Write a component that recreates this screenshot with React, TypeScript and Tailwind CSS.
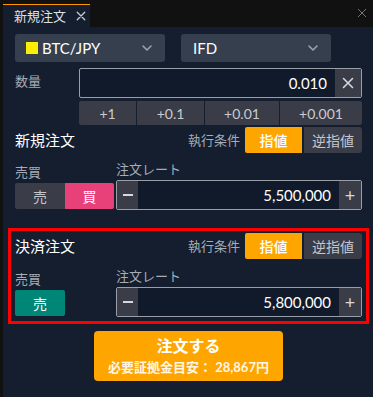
import React from "react";

const font = { fontFamily: 'Lato, "Noto Sans CJK JP", sans-serif' };

function Chevron() {
  return (
    <svg width="14" height="14" viewBox="0 0 14 14" fill="none">
      <path d="M3 5l4 4 4-4" stroke="#9aa3b2" strokeWidth="1.6" strokeLinecap="round" strokeLinejoin="round" />
    </svg>
  );
}

function XIcon({ size = 12, color = "#cfd3da", w = 1.5 }: { size?: number; color?: string; w?: number }) {
  return (
    <svg width={size} height={size} viewBox="0 0 12 12" fill="none">
      <path d="M1.5 1.5l9 9M10.5 1.5l-9 9" stroke={color} strokeWidth={w} strokeLinecap="round" />
    </svg>
  );
}

function CondHeader({ title }: { title: string }) {
  return (
    <div className="flex items-center h-[26px]">
      <div className="flex-1 text-[15px] text-white leading-none">{title}</div>
      <div className="text-[13px] text-[#a6abb4] mr-[5px] leading-none">執行条件</div>
      <div className="w-[57px] h-[26px] bg-[#ffa500] rounded-l-[2px] flex items-center justify-center text-white text-[14px] font-medium">指値</div>
      <div className="ml-[2px] w-[58px] h-[26px] bg-[#3a3c48] rounded-r-[3px] flex items-center justify-center text-[#c3c6cc] text-[14px]">逆指値</div>
    </div>
  );
}

function RateInput({ value }: { value: string }) {
  return (
    <div className="h-[30px] border border-[#9a9ea6] rounded-[2px] flex items-stretch bg-[#111a2a]">
      <div className="w-[21px] bg-[#3a3c48] flex items-center justify-center">
        <div className="w-[10px] h-[2px] bg-[#d6d8dc]" />
      </div>
      <div className="flex-1 flex items-center justify-end pr-[8px] text-white text-[15px]">{value}</div>
      <div className="w-[22px] bg-[#3a3c48] flex items-center justify-center text-[#d6d8dc] text-[18px] leading-none">+</div>
    </div>
  );
}

export default function App() {
  return (
    <div className="w-[373px] h-[397px] bg-[#111111] flex flex-col overflow-hidden" style={font}>
      <div className="h-[27px] flex items-end justify-between pl-[3px] shrink-0">
        <div className="w-[87px] h-[23px] border-t border-[#ff9800] bg-[#141e2f] flex items-center pl-[11px] gap-[10px]">
          <span className="text-[13px] text-[#dde0e5] leading-none">新規注文</span>
          <XIcon size={10} color="#c8ccd2" w={1.6} />
        </div>
        <div className="self-start mt-[8px] mr-[6px]">
          <XIcon size={10} color="#8a8a8a" w={1} />
        </div>
      </div>
      <div className="flex-1 ml-[3px] bg-[#141e2f] pl-[12px] pr-[11px] pt-[7px] flex flex-col">
        <div className="flex gap-[16px]">
          <div className="w-[150px] h-[28px] bg-[#363f4e] rounded-[3px] flex items-center pl-[11px] pr-[11px]">
            <div className="w-[12px] h-[12px] bg-[#ffee00] mr-[4px]" />
            <span className="flex-1 text-white text-[15px] leading-none">BTC/JPY</span>
            <Chevron />
          </div>
          <div className="w-[150px] h-[28px] bg-[#363f4e] rounded-[3px] flex items-center pl-[12px] pr-[11px]">
            <span className="flex-1 text-white text-[15px] leading-none">IFD</span>
            <Chevron />
          </div>
        </div>

        <div className="flex mt-[6px]">
          <div className="w-[64px] pt-[7px] text-[13px] text-[#a6abb4] leading-none">数量</div>
          <div className="flex-1 h-[30px] border border-[#9a9ea6] rounded-[2px] flex items-stretch bg-[#111a2a]">
            <div className="flex-1 flex items-center justify-end pr-[8px] text-white text-[15px]">0.010</div>
            <div className="w-[26px] bg-[#3a3c48] flex items-center justify-center">
              <XIcon size={12} color="#d6d8dc" w={1.6} />
            </div>
          </div>
        </div>
        <div className="flex ml-[64px] mt-[3px] h-[24px] gap-[1px]">
          <div className="w-[57px] bg-[#3a3c48] rounded-l-[2px] flex items-center justify-center text-[14px] text-[#c8cbd1]">+1</div>
          <div className="w-[67px] bg-[#3a3c48] flex items-center justify-center text-[14px] text-[#c8cbd1]">+0.1</div>
          <div className="w-[74px] bg-[#3a3c48] flex items-center justify-center text-[14px] text-[#c8cbd1]">+0.01</div>
          <div className="flex-1 bg-[#3a3c48] rounded-r-[2px] flex items-center justify-center text-[14px] text-[#c8cbd1]">+0.001</div>
        </div>

        <div className="mt-[2px]">
          <CondHeader title="新規注文" />
        </div>
        <div className="flex mt-[10px]">
          <div className="w-[101px] flex flex-col">
            <div className="text-[13px] text-[#a6abb4] leading-none mt-[3px]">売買</div>
            <div className="flex mt-[4px] h-[26px]">
              <div className="w-[50px] bg-[#3a3c48] rounded-l-[2px] flex items-center justify-center text-[14px] text-[#c3c6cc]">売</div>
              <div className="w-[49px] bg-[#e8417a] rounded-r-[2px] flex items-center justify-center text-[14px] text-white">買</div>
            </div>
          </div>
          <div className="flex-1 flex flex-col">
            <div className="text-[13px] text-[#a6abb4] leading-none">注文レート</div>
            <div className="mt-[4px]">
              <RateInput value="5,500,000" />
            </div>
          </div>
        </div>

        <div className="mt-[18px] -mx-[7px] border-[3px] border-[#ff0000] px-[4px] pt-[2px] pb-[4px]">
          <CondHeader title="決済注文" />
          <div className="flex mt-[11px]">
            <div className="w-[101px] flex flex-col">
              <div className="text-[13px] text-[#a6abb4] leading-none mt-[3px]">売買</div>
              <div className="flex mt-[4px] h-[26px]">
                <div className="w-[50px] bg-[#008676] rounded-[2px] flex items-center justify-center text-[14px] text-white">売</div>
              </div>
            </div>
            <div className="flex-1 flex flex-col">
              <div className="text-[13px] text-[#a6abb4] leading-none">注文レート</div>
              <div className="mt-[4px]">
                <RateInput value="5,800,000" />
              </div>
            </div>
          </div>
        </div>

        <div className="flex justify-center mt-[7px]">
          <div className="w-[189px] h-[50px] bg-[#ffa500] rounded-[4px] flex flex-col items-center justify-center">
            <div className="text-white text-[16px] font-bold leading-none">注文する</div>
            <div className="text-[#fff6e6] text-[13px] font-bold leading-none mt-[7px]">必要証拠金目安： 28,867円</div>
          </div>
        </div>
      </div>
    </div>
  );
}
